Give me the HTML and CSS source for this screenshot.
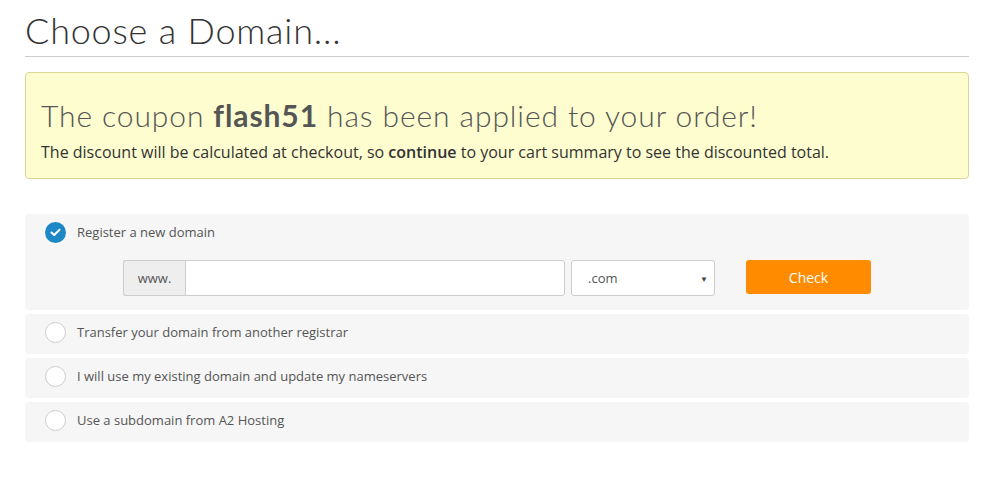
FILE: index.html
```html
<!DOCTYPE html>
<html>
  <head>
    <title>Choose a Domain</title>
    <link rel="stylesheet" href="styles.css">
  </head>
  <body>
    <main class="page">
      <h1 class="page-title">Choose a Domain...</h1>

      <div class="coupon-alert">
        <h2>The coupon <strong>flash51</strong> has been applied to your order!</h2>
        <p>The discount will be calculated at checkout, so <strong>continue</strong> to your cart summary to see the discounted total.</p>
      </div>

      <div class="domain-options">
        <div class="option option-active">
          <label class="option-label">
            <span class="radio radio-checked">
              <svg width="11" height="9" viewBox="0 0 11 9"><path d="M1.5 4.5 L4.2 7 L9.5 1.8" fill="none" stroke="#fff" stroke-width="2" stroke-linecap="round" stroke-linejoin="round"/></svg>
            </span>
            Register a new domain
          </label>
          <div class="domain-search">
            <div class="input-group">
              <span class="addon">www.</span>
              <input type="text" class="domain-input">
            </div>
            <div class="tld-select">
              <span>.com</span>
              <span class="caret">&#9660;</span>
            </div>
            <button class="check-btn">Check</button>
          </div>
        </div>

        <div class="option">
          <label class="option-label"><span class="radio"></span>Transfer your domain from another registrar</label>
        </div>
        <div class="option">
          <label class="option-label"><span class="radio"></span>I will use my existing domain and update my nameservers</label>
        </div>
        <div class="option">
          <label class="option-label"><span class="radio"></span>Use a subdomain from A2 Hosting</label>
        </div>
      </div>
    </main>
  </body>
</html>
```

FILE: styles.css
```css
body {
  margin: 0;
  background-color: #fff;
  font-family: "Open Sans", Arial, sans-serif;
  color: #333;
}

.page {
  width: 944px;
  margin-left: 25px;
  padding-top: 10px;
}

.page-title {
  font-family: Lato, "Open Sans", sans-serif;
  font-weight: 300;
  font-size: 36px;
  line-height: 40px;
  letter-spacing: 0.8px;
  color: #333;
  margin: 0;
  padding-bottom: 6px;
  border-bottom: 1px solid #ccc;
}

.coupon-alert {
  margin-top: 15px;
  background-color: #fefdcf;
  border: 1px solid #d9d696;
  border-radius: 4px;
  padding: 25px 15px 15px;
}

.coupon-alert h2 {
  font-family: Lato, "Open Sans", sans-serif;
  font-weight: 300;
  font-size: 30px;
  line-height: 34px;
  letter-spacing: 0.9px;
  color: #555;
  margin: 0 0 9px;
}

.coupon-alert h2 strong {
  font-weight: 700;
}

.coupon-alert p {
  font-size: 16px;
  line-height: 22px;
  margin: 0;
}

.coupon-alert p strong {
  font-weight: 600;
}

.domain-options {
  margin-top: 35px;
  display: flex;
  flex-direction: column;
  gap: 4px;
}

.option {
  background-color: #f6f6f6;
  border-radius: 4px;
  padding: 8px 20px 11px;
}

.option-active {
  padding-bottom: 14px;
}

.option-label {
  display: flex;
  align-items: center;
  gap: 11px;
  font-size: 13px;
  line-height: 21px;
  color: #555;
}

.radio {
  width: 19px;
  height: 19px;
  border: 1px solid #ccc;
  border-radius: 50%;
  background-color: #fff;
  display: flex;
  align-items: center;
  justify-content: center;
}

.radio-checked {
  width: 21px;
  height: 21px;
  border: none;
  background-color: #1e87c6;
}

.domain-search {
  display: flex;
  align-items: flex-start;
  margin-top: 17px;
  margin-left: 78px;
}

.input-group {
  display: flex;
  height: 36px;
}

.addon {
  width: 61px;
  border: 1px solid #ccc;
  border-right: none;
  border-radius: 3px 0 0 3px;
  background-color: #eee;
  color: #555;
  font-size: 13px;
  display: flex;
  align-items: center;
  justify-content: center;
}

.domain-input {
  width: 378px;
  border: 1px solid #ccc;
  border-radius: 0 3px 3px 0;
  background-color: #fff;
  padding: 0;
  margin: 0;
}

.tld-select {
  margin-left: 6px;
  border: 1px solid #ccc;
  border-radius: 3px;
  background-color: #fff;
  display: flex;
  align-items: center;
  justify-content: space-between;
  padding: 0 4px 0 16px;
  box-sizing: border-box;
  width: 144px;
  height: 36px;
  font-size: 13px;
  color: #555;
}

.caret {
  font-size: 8px;
  color: #444;
  padding-right: 2px;
}

.check-btn {
  margin-left: 31px;
  width: 125px;
  height: 34px;
  background-color: #ff8c00;
  color: #fff;
  border: none;
  border-radius: 3px;
  font-family: "Open Sans", Arial, sans-serif;
  font-size: 14px;
  cursor: pointer;
}
```
